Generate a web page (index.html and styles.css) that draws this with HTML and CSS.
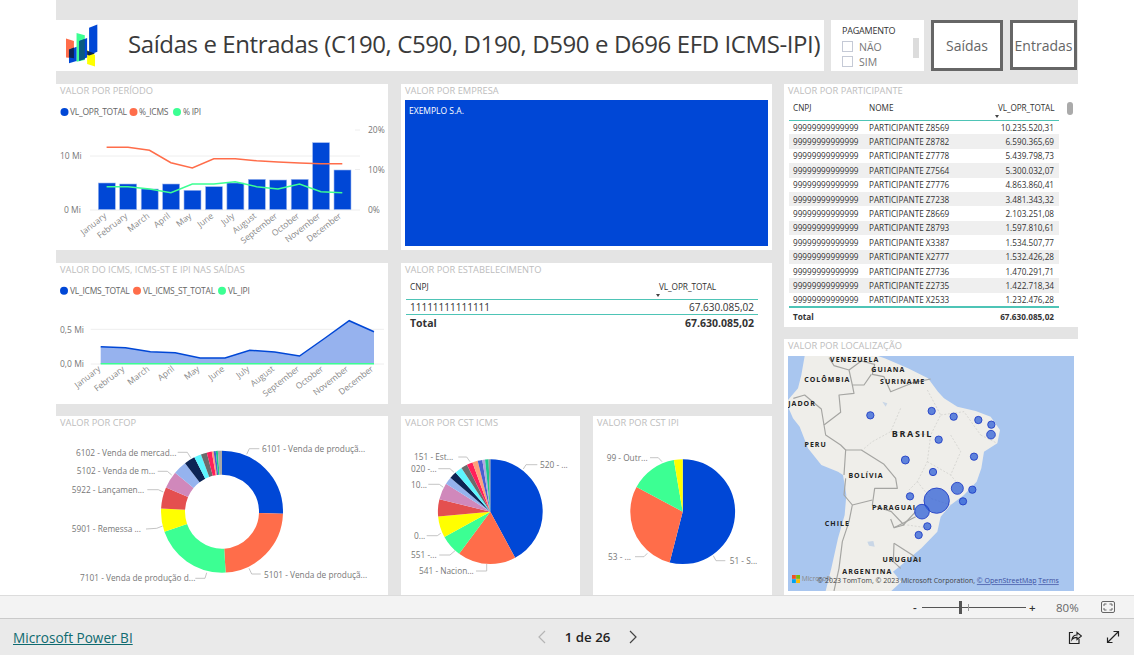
FILE: index.html
```html
<!DOCTYPE html>
<html lang="pt">
<head>
<meta charset="utf-8">
<title>Saídas e Entradas</title>
<link rel="stylesheet" href="styles.css">
</head>
<body>
<div class="canvas">
  <header class="header">
    <div class="title-box">
      <svg class="logo" viewBox="198 72 97 128" width="32" height="43">
        <polygon points="198,115 222,122 222,175 198,172" fill="#ff6d4a"/>
        <polygon points="230,98 255,105 255,180 230,185" fill="#3cff93"/>
        <polygon points="262,150 286,165 286,200 262,192" fill="#ffff00"/>
        <polygon points="268,82 293,72 293,155 268,165" fill="#0047d6"/>
        <polygon points="238,122 262,113 262,172 238,182" fill="#0047d6"/>
        <polygon points="207,150 230,140 230,183 207,190" fill="#0047d6"/>
        <polygon points="207,148 222,142 222,175 207,172" fill="#0c2454"/>
        <polygon points="238,122 255,116 255,178 238,182" fill="#0a5a80"/>
        <polygon points="262,152 286,160 268,166 262,164" fill="#0c2454"/>
      </svg>
      <h1 class="title">Saídas e Entradas (C190, C590, D190, D590 e D696 EFD ICMS-IPI)</h1>
    </div>
    <div class="slicer">
      <div class="slicer-title">PAGAMENTO</div>
      <label class="slicer-item"><span class="check"></span>NÃO</label>
      <label class="slicer-item"><span class="check"></span>SIM</label>
      <span class="slicer-scroll"></span>
    </div>
    <button class="nav-btn nav-btn-out">Saídas</button>
    <button class="nav-btn nav-btn-in">Entradas</button>
  </header>

  <div class="dash">
    <div class="main">
      <div class="row row-1">
        <section class="panel">
          <div class="panel-title">VALOR POR PERÍODO</div>
          <svg class="chart" viewBox="56 97 332 153" width="332" height="153">
            <g class="legend">
              <circle cx="64.5" cy="112" r="4" fill="#0047d6"/><text x="70" y="115">VL_OPR_TOTAL</text>
              <circle cx="133.5" cy="112" r="4" fill="#ff6d4a"/><text x="139" y="115">%_ICMS</text>
              <circle cx="177" cy="112" r="4" fill="#3cff93"/><text x="183" y="115">% IPI</text>
            </g>
            <line class="grid" x1="90" y1="156" x2="360" y2="156"/>
            <line class="grid" x1="90" y1="210" x2="360" y2="210"/>
            <line class="grid" x1="355" y1="130" x2="360" y2="130"/>
            <line class="grid" x1="355" y1="169.5" x2="360" y2="169.5"/>
            <g class="bars">
              <rect x="98.3" y="183" width="17" height="26.5"/>
              <rect x="119.7" y="184" width="17" height="25.5"/>
              <rect x="141.2" y="189" width="17" height="20.5"/>
              <rect x="162.6" y="184" width="17" height="25.5"/>
              <rect x="184" y="190.3" width="17" height="19.2"/>
              <rect x="205.5" y="186.7" width="17" height="22.8"/>
              <rect x="226.9" y="183" width="17" height="26.5"/>
              <rect x="248.3" y="179.3" width="17" height="30.2"/>
              <rect x="269.7" y="180" width="17" height="29.5"/>
              <rect x="291.2" y="179.3" width="17" height="30.2"/>
              <rect x="312.6" y="142.7" width="17" height="66.8"/>
              <rect x="334" y="170" width="17" height="39.5"/>
            </g>
            <polyline class="line" stroke="#ff6d4a" points="106.6,147.3 128,147.3 149.5,150.3 170.9,162.7 192.3,168 213.8,158.7 235.2,158.7 256.6,160.7 278,162 299.5,163 320.9,163.7 342.3,163.7"/>
            <polyline class="line" stroke="#3cff93" points="106.6,186.7 128,186.7 149.5,189 170.9,192.7 192.3,184 213.8,184 235.2,181.7 256.6,186.7 278,189 299.5,184 320.9,191.7 342.3,192.7"/>
            <g class="axis">
              <text x="60" y="159">10 Mi</text><text x="64" y="213">0 Mi</text>
              <text x="368" y="133">20%</text><text x="368" y="173">10%</text><text x="368" y="213">0%</text>
            </g>
            <g class="axis months">
              <text x="107" y="217" transform="rotate(-38 107 217)">January</text>
              <text x="128" y="217" transform="rotate(-38 128 217)">February</text>
              <text x="150" y="217" transform="rotate(-38 150 217)">March</text>
              <text x="171" y="217" transform="rotate(-38 171 217)">April</text>
              <text x="192" y="217" transform="rotate(-38 192 217)">May</text>
              <text x="214" y="217" transform="rotate(-38 214 217)">June</text>
              <text x="235" y="217" transform="rotate(-38 235 217)">July</text>
              <text x="257" y="217" transform="rotate(-38 257 217)">August</text>
              <text x="278" y="217" transform="rotate(-38 278 217)">September</text>
              <text x="300" y="217" transform="rotate(-38 300 217)">October</text>
              <text x="321" y="217" transform="rotate(-38 321 217)">November</text>
              <text x="342" y="217" transform="rotate(-38 342 217)">December</text>
            </g>
          </svg>
        </section>
        <section class="panel">
          <div class="panel-title">VALOR POR EMPRESA</div>
          <div class="treemap">EXEMPLO S.A.</div>
        </section>
      </div>

      <div class="row row-2">
        <section class="panel">
          <div class="panel-title">VALOR DO ICMS, ICMS-ST E IPI NAS SAÍDAS</div>
          <svg class="chart" viewBox="56 276 332 128" width="332" height="128">
            <g class="legend">
              <circle cx="64" cy="290.7" r="4" fill="#0047d6"/><text x="70" y="293.7">VL_ICMS_TOTAL</text>
              <circle cx="137" cy="290.7" r="4" fill="#ff6d4a"/><text x="143" y="293.7">VL_ICMS_ST_TOTAL</text>
              <circle cx="222" cy="290.7" r="4" fill="#3cff93"/><text x="228" y="293.7">VL_IPI</text>
            </g>
            <line class="grid" x1="90.7" y1="329.3" x2="384" y2="329.3"/>
            <line class="grid" x1="90.7" y1="364" x2="384" y2="364"/>
            <polygon fill="#96b2ee" points="100.7,346.7 125.5,347.7 150.4,351.7 175.2,352.7 200.1,358 225,358 249.8,350.3 274.7,352 299.5,356 324.4,338.5 349.2,320.7 374,331.7 374,364 100.7,364"/>
            <polyline class="line" stroke="#0047d6" points="100.7,346.7 125.5,347.7 150.4,351.7 175.2,352.7 200.1,358 225,358 249.8,350.3 274.7,352 299.5,356 324.4,338.5 349.2,320.7 374,331.7"/>
            <line class="line" stroke="#3cff93" x1="100.7" y1="363.7" x2="374" y2="363.7"/>
            <g class="axis">
              <text x="60" y="332.5">0,5 Mi</text><text x="60" y="367">0,0 Mi</text>
            </g>
            <g class="axis months">
              <text x="101" y="370" transform="rotate(-38 101 370)">January</text>
              <text x="125" y="370" transform="rotate(-38 125 370)">February</text>
              <text x="150" y="370" transform="rotate(-38 150 370)">March</text>
              <text x="175" y="370" transform="rotate(-38 175 370)">April</text>
              <text x="200" y="370" transform="rotate(-38 200 370)">May</text>
              <text x="225" y="370" transform="rotate(-38 225 370)">June</text>
              <text x="250" y="370" transform="rotate(-38 250 370)">July</text>
              <text x="275" y="370" transform="rotate(-38 275 370)">August</text>
              <text x="300" y="370" transform="rotate(-38 300 370)">September</text>
              <text x="324" y="370" transform="rotate(-38 324 370)">October</text>
              <text x="349" y="370" transform="rotate(-38 349 370)">November</text>
              <text x="374" y="370" transform="rotate(-38 374 370)">December</text>
            </g>
          </svg>
        </section>
        <section class="panel">
          <div class="panel-title">VALOR POR ESTABELECIMENTO</div>
          <table class="tbl tbl-est">
            <thead><tr><th>CNPJ</th><th class="th-sort">VL_OPR_TOTAL</th></tr></thead>
            <tbody><tr><td>11111111111111</td><td class="num">67.630.085,02</td></tr></tbody>
            <tfoot><tr><td>Total</td><td class="num">67.630.085,02</td></tr></tfoot>
          </table>
        </section>
      </div>

      <div class="row row-3">
        <section class="panel">
          <div class="panel-title">VALOR POR CFOP</div>
          <svg class="chart" viewBox="56 429 332 166" width="332" height="166">
            <g transform="rotate(-90 222 511.7)" fill="none" stroke-width="24">
              <circle cx="222" cy="511.7" r="49" pathLength="360" stroke="#0047d6" stroke-dasharray="92 360"/>
              <circle cx="222" cy="511.7" r="49" pathLength="360" stroke="#ff6d4a" stroke-dasharray="84.5 360" stroke-dashoffset="-92"/>
              <circle cx="222" cy="511.7" r="49" pathLength="360" stroke="#3cff93" stroke-dasharray="74.2 360" stroke-dashoffset="-176.5"/>
              <circle cx="222" cy="511.7" r="49" pathLength="360" stroke="#ffff00" stroke-dasharray="22.3 360" stroke-dashoffset="-250.7"/>
              <circle cx="222" cy="511.7" r="49" pathLength="360" stroke="#e44f4f" stroke-dasharray="20.4 360" stroke-dashoffset="-273"/>
              <circle cx="222" cy="511.7" r="49" pathLength="360" stroke="#d088bb" stroke-dasharray="16.4 360" stroke-dashoffset="-293.4"/>
              <circle cx="222" cy="511.7" r="49" pathLength="360" stroke="#95b3ee" stroke-dasharray="12.9 360" stroke-dashoffset="-309.8"/>
              <circle cx="222" cy="511.7" r="49" pathLength="360" stroke="#0c2454" stroke-dasharray="10.3 360" stroke-dashoffset="-322.7"/>
              <circle cx="222" cy="511.7" r="49" pathLength="360" stroke="#5cf6ff" stroke-dasharray="6.8 360" stroke-dashoffset="-333"/>
              <circle cx="222" cy="511.7" r="49" pathLength="360" stroke="#6b6b6b" stroke-dasharray="5.7 360" stroke-dashoffset="-339.8"/>
              <circle cx="222" cy="511.7" r="49" pathLength="360" stroke="#ff1f5a" stroke-dasharray="4.8 360" stroke-dashoffset="-345.5"/>
              <circle cx="222" cy="511.7" r="49" pathLength="360" stroke="#ffa07a" stroke-dasharray="1.7 360" stroke-dashoffset="-350.3"/>
              <circle cx="222" cy="511.7" r="49" pathLength="360" stroke="#4a5fd0" stroke-dasharray="2 360" stroke-dashoffset="-352"/>
              <circle cx="222" cy="511.7" r="49" pathLength="360" stroke="#19c98b" stroke-dasharray="2 360" stroke-dashoffset="-354"/>
              <circle cx="222" cy="511.7" r="49" pathLength="360" stroke="#a8a8a8" stroke-dasharray="4 360" stroke-dashoffset="-356"/>
            </g>
            <g class="leaders">
              <polyline points="246.7,454.3 249.3,448.7 259.3,448.7"/>
              <polyline points="177.7,452.3 187.3,452.3 190.7,457.7"/>
              <polyline points="157.7,471.3 167.3,471.3 171.7,475"/>
              <polyline points="147.3,489.7 158.3,489.7 163.3,492"/>
              <polyline points="146,529 156.7,528.3 162.7,526"/>
              <polyline points="195.3,578.3 205,578.3 206.7,572.7"/>
              <polyline points="249,568.3 251.7,574 260.7,574"/>
            </g>
            <g class="axis pie-label">
              <text x="262" y="452">6101 - Venda de produçã...</text>
              <text x="76" y="456">6102 - Venda de mercad...</text>
              <text x="76.7" y="474">5102 - Venda de m...</text>
              <text x="71.7" y="493">5922 - Lançamen...</text>
              <text x="71.7" y="532">5901 - Remessa ...</text>
              <text x="80" y="581">7101 - Venda de produção d...</text>
              <text x="264" y="578">5101 - Venda de produçã...</text>
            </g>
          </svg>
        </section>
        <div class="pair">
          <section class="panel">
            <div class="panel-title">VALOR POR CST ICMS</div>
            <svg class="chart" viewBox="401 429 179 166" width="179" height="166">
              <g transform="rotate(-90 490.3 511.7)" fill="none" stroke-width="52.4">
                <circle cx="490.3" cy="511.7" r="26.2" pathLength="360" stroke="#0047d6" stroke-dasharray="151.6 360"/>
                <circle cx="490.3" cy="511.7" r="26.2" pathLength="360" stroke="#ff6d4a" stroke-dasharray="65 360" stroke-dashoffset="-151.6"/>
                <circle cx="490.3" cy="511.7" r="26.2" pathLength="360" stroke="#3cff93" stroke-dasharray="24.4 360" stroke-dashoffset="-216.6"/>
                <circle cx="490.3" cy="511.7" r="26.2" pathLength="360" stroke="#ffff00" stroke-dasharray="23.5 360" stroke-dashoffset="-241"/>
                <circle cx="490.3" cy="511.7" r="26.2" pathLength="360" stroke="#e44f4f" stroke-dasharray="19.5 360" stroke-dashoffset="-264.5"/>
                <circle cx="490.3" cy="511.7" r="26.2" pathLength="360" stroke="#d088bb" stroke-dasharray="18.4 360" stroke-dashoffset="-284"/>
                <circle cx="490.3" cy="511.7" r="26.2" pathLength="360" stroke="#95b3ee" stroke-dasharray="8.2 360" stroke-dashoffset="-302.4"/>
                <circle cx="490.3" cy="511.7" r="26.2" pathLength="360" stroke="#0c2454" stroke-dasharray="7.8 360" stroke-dashoffset="-310.6"/>
                <circle cx="490.3" cy="511.7" r="26.2" pathLength="360" stroke="#5cf6ff" stroke-dasharray="8.1 360" stroke-dashoffset="-318.4"/>
                <circle cx="490.3" cy="511.7" r="26.2" pathLength="360" stroke="#6b6b6b" stroke-dasharray="6.9 360" stroke-dashoffset="-326.5"/>
                <circle cx="490.3" cy="511.7" r="26.2" pathLength="360" stroke="#ff1f5a" stroke-dasharray="6.6 360" stroke-dashoffset="-333.4"/>
                <circle cx="490.3" cy="511.7" r="26.2" pathLength="360" stroke="#ffa07a" stroke-dasharray="5.8 360" stroke-dashoffset="-340"/>
                <circle cx="490.3" cy="511.7" r="26.2" pathLength="360" stroke="#4a5fd0" stroke-dasharray="5.1 360" stroke-dashoffset="-345.8"/>
                <circle cx="490.3" cy="511.7" r="26.2" pathLength="360" stroke="#b0a8e0" stroke-dasharray="3.1 360" stroke-dashoffset="-350.9"/>
                <circle cx="490.3" cy="511.7" r="26.2" pathLength="360" stroke="#19c98b" stroke-dasharray="4 360" stroke-dashoffset="-354"/>
                <circle cx="490.3" cy="511.7" r="26.2" pathLength="360" stroke="#999999" stroke-dasharray="2 360" stroke-dashoffset="-358"/>
              </g>
              <g class="leaders">
                <polyline points="458.3,457 466.7,457 470,461.7"/>
                <polyline points="438.3,468.7 450,468.7 454,472.3"/>
                <polyline points="428.3,484.3 439.3,484.3 443.3,487.3"/>
                <polyline points="426.7,535.7 437.3,535.7 440.7,533.3"/>
                <polyline points="439.3,555 450,555 455,550.7"/>
                <polyline points="476,571 486.7,571 486.7,564"/>
                <polyline points="523.3,469 526,464.7 537.3,464.7"/>
              </g>
              <g class="axis pie-label">
                <text x="414" y="460">151 - Est...</text>
                <text x="411" y="472">020 -...</text>
                <text x="411" y="488">10...</text>
                <text x="414" y="539">0...</text>
                <text x="411" y="558">551 -...</text>
                <text x="419" y="574">541 - Nacion...</text>
                <text x="540" y="468">520 - ...</text>
              </g>
            </svg>
          </section>
          <section class="panel">
            <div class="panel-title">VALOR POR CST IPI</div>
            <svg class="chart" viewBox="593 429 179 166" width="179" height="166">
              <g transform="rotate(-90 682.7 511.7)" fill="none" stroke-width="52.4">
                <circle cx="682.7" cy="511.7" r="26.2" pathLength="360" stroke="#0047d6" stroke-dasharray="194.7 360"/>
                <circle cx="682.7" cy="511.7" r="26.2" pathLength="360" stroke="#ff6d4a" stroke-dasharray="103.6 360" stroke-dashoffset="-194.7"/>
                <circle cx="682.7" cy="511.7" r="26.2" pathLength="360" stroke="#3cff93" stroke-dasharray="51.7 360" stroke-dashoffset="-298.3"/>
                <circle cx="682.7" cy="511.7" r="26.2" pathLength="360" stroke="#ffff00" stroke-dasharray="10 360" stroke-dashoffset="-350"/>
              </g>
              <g class="leaders">
                <polyline points="650,457.7 658.3,457.7 662,461.7"/>
                <polyline points="635,556.7 644,556.7 647.3,553.3"/>
                <polyline points="713.3,555.7 716,560.7 725.3,560.7"/>
              </g>
              <g class="axis pie-label">
                <text x="606.7" y="461">99 - Outr...</text>
                <text x="608" y="560">53 - ...</text>
                <text x="729.7" y="564">51 - S...</text>
              </g>
            </svg>
          </section>
        </div>
      </div>
    </div>

    <div class="side">
      <section class="panel panel-part">
        <div class="panel-title">VALOR POR PARTICIPANTE</div>
        <span class="scroll-thumb"></span>
        <table class="tbl tbl-part">
          <thead><tr><th class="c1">CNPJ</th><th class="c2">NOME</th><th class="th-sort">VL_OPR_TOTAL</th></tr></thead>
          <tbody>
            <tr><td>99999999999999</td><td>PARTICIPANTE Z8569</td><td class="num">10.235.520,31</td></tr>
            <tr><td>99999999999999</td><td>PARTICIPANTE Z8782</td><td class="num">6.590.365,69</td></tr>
            <tr><td>99999999999999</td><td>PARTICIPANTE Z7778</td><td class="num">5.439.798,73</td></tr>
            <tr><td>99999999999999</td><td>PARTICIPANTE Z7564</td><td class="num">5.300.032,07</td></tr>
            <tr><td>99999999999999</td><td>PARTICIPANTE Z7776</td><td class="num">4.863.860,41</td></tr>
            <tr><td>99999999999999</td><td>PARTICIPANTE Z7238</td><td class="num">3.481.343,32</td></tr>
            <tr><td>99999999999999</td><td>PARTICIPANTE Z8669</td><td class="num">2.103.251,08</td></tr>
            <tr><td>99999999999999</td><td>PARTICIPANTE Z8793</td><td class="num">1.597.810,61</td></tr>
            <tr><td>99999999999999</td><td>PARTICIPANTE X3387</td><td class="num">1.534.507,77</td></tr>
            <tr><td>99999999999999</td><td>PARTICIPANTE X2777</td><td class="num">1.532.426,28</td></tr>
            <tr><td>99999999999999</td><td>PARTICIPANTE Z7736</td><td class="num">1.470.291,71</td></tr>
            <tr><td>99999999999999</td><td>PARTICIPANTE Z2735</td><td class="num">1.422.718,34</td></tr>
            <tr><td>99999999999999</td><td>PARTICIPANTE X2533</td><td class="num">1.232.476,28</td></tr>
          </tbody>
          <tfoot><tr><td>Total</td><td></td><td class="num">67.630.085,02</td></tr></tfoot>
        </table>
      </section>
      <section class="panel panel-map">
        <div class="panel-title">VALOR POR LOCALIZAÇÃO</div>
        <svg class="map" viewBox="12 63 858 705" width="286" height="235">
          <rect x="12" y="63" width="858" height="705" fill="#a9c6ef"/>
          <path fill="#efeeea" d="M62,63 L52,120 L42,160 L12,195 L12,215 L27,250 L47,275 L72,340 L112,390 L162,410 L177,420 L187,480 L182,540 L162,610 L142,700 L125,768 L322,768 L352,740 L327,710 L352,690 L412,640 L460,590 L470,545 L500,510 L540,480 L578,440 L592,400 L600,350 L640,325 L648,285 L620,245 L575,228 L520,215 L480,190 L462,170 L432,130 L372,100 L302,70 L282,63 Z"/>
          <g class="border">
            <path d="M135,68 L150,92 L195,105 L205,150 L210,175 L165,180 L170,232 L120,270 L125,300 L170,330 L185,345 L180,420"/>
            <path d="M195,105 L232,78 L272,88 L265,118 L300,125 L320,170 L390,142 L440,132"/>
            <path d="M205,150 L240,150 L262,118"/>
            <path d="M28,190 L62,180 L112,222 L120,270"/>
            <path d="M185,345 L232,345 L300,388 L335,430 L340,460 L272,460 L265,510 L322,530 L360,570 L330,578 L320,552"/>
            <path d="M185,430 L180,480 L205,510 L195,560 L175,620 L165,700 L150,768"/>
            <path d="M205,510 L265,495"/>
            <path d="M330,578 L395,545"/>
            <path d="M330,625 L385,660 L410,680"/>
            <path d="M330,625 L328,680 L350,700"/>
            <path d="M358,570 L395,530"/>
          </g>
          <g class="state">
            <path d="M350,220 L320,290 L265,320 L235,345"/>
            <path d="M430,165 L470,240 L440,300 L430,380 L400,440 L370,470"/>
            <path d="M320,290 L440,300"/>
            <path d="M470,240 L540,230 L590,300"/>
            <path d="M500,300 L530,350 L500,420 L540,470"/>
            <path d="M430,380 L500,420"/>
            <path d="M400,440 L440,490 L500,510"/>
            <path d="M590,300 L640,325"/>
            <path d="M370,570 L440,580"/>
          </g>
          <path fill="#c9d6e6" d="M250,620 L268,618 L272,635 L255,632 Z"/>
          <path fill="#c9d6e6" d="M295,200 L310,205 L305,215 Z"/>
          <g class="map-label">
            <text x="212" y="80">VENEZUELA</text>
            <text x="313" y="112">GUIANA</text>
            <text x="356" y="146">SURINAME</text>
            <text x="130" y="140">COLÔMBIA</text>
            <text x="54" y="212">JADOR</text>
            <text class="map-label-big" x="385" y="307">BRASIL</text>
            <text x="95" y="337">PERU</text>
            <text x="246" y="428">BOLÍVIA</text>
            <text x="330" y="524">PARAGUAI</text>
            <text x="160" y="572">CHILE</text>
            <text x="355" y="682">URUGUAI</text>
            <text x="250" y="716">ARGENTINA</text>
          </g>
          <g class="bubble">
            <circle cx="259" cy="241" r="11"/><circle cx="443" cy="228" r="11"/><circle cx="509" cy="245" r="11"/>
            <circle cx="583" cy="255" r="11"/><circle cx="622" cy="269" r="11"/><circle cx="621" cy="299" r="13"/>
            <circle cx="464" cy="314" r="11"/><circle cx="570" cy="365" r="11"/><circle cx="364" cy="375" r="12"/>
            <circle cx="447" cy="411" r="11"/><circle cx="520" cy="460" r="18"/><circle cx="565" cy="464" r="11"/>
            <circle cx="537" cy="499" r="11"/><circle cx="378" cy="484" r="11"/><circle cx="458" cy="497" r="38"/>
            <circle cx="414" cy="530" r="22"/><circle cx="430" cy="574" r="11"/><circle cx="404" cy="600" r="11"/>
          </g>
          <g>
            <rect x="24" y="720" width="11.5" height="11.5" fill="#f25022"/>
            <rect x="36.5" y="720" width="11.5" height="11.5" fill="#7fba00"/>
            <rect x="24" y="732.5" width="11.5" height="11.5" fill="#00a4ef"/>
            <rect x="36.5" y="732.5" width="11.5" height="11.5" fill="#ffb900"/>
            <text class="map-ms" x="53" y="738">Microsoft</text>
            <text class="map-attr" x="100" y="745">© 2023 TomTom, © 2023 Microsoft Corporation, <tspan class="map-link">© OpenStreetMap</tspan>  <tspan class="map-link">Terms</tspan></text>
          </g>
        </svg>
      </section>
    </div>
  </div>
</div>

<div class="statusbar">
  <span class="zoom-sign">-</span>
  <span class="slider"><span class="slider-tick"></span><span class="slider-thumb"></span></span>
  <span class="zoom-sign">+</span>
  <span class="zoom-pct">80%</span>
  <svg class="fit-icon" viewBox="0 0 14 12" width="14" height="12">
    <rect x="0.5" y="0.5" width="13" height="11" rx="1.5" class="icon-stroke"/>
    <path d="M3 5V3h2.5M8.5 3H11v2M11 7v2H8.5M5.5 9H3V7" class="icon-stroke"/>
  </svg>
</div>

<footer class="footer">
  <a class="pbi-link" href="#">Microsoft Power BI</a>
  <nav class="pager">
    <svg class="pager-arrow" viewBox="0 0 8 14" width="8" height="14"><path d="M7 1L1 7l6 6" class="arrow-off"/></svg>
    <span class="pager-text">1 de 26</span>
    <svg class="pager-arrow" viewBox="0 0 8 14" width="8" height="14"><path d="M1 1l6 6-6 6" class="arrow-on"/></svg>
  </nav>
  <div class="foot-icons">
    <svg viewBox="0 0 14 15" width="14" height="15">
      <path d="M5 2.5H1.5v11h9.5V9" class="foot-icon"/>
      <path d="M4 9.5C4.5 6.5 6.5 5 9 5V2.5L13.5 6 9 9.5V7.3C7 7.3 5.2 8 4 9.5Z" class="foot-icon"/>
    </svg>
    <svg viewBox="0 0 14 14" width="14" height="14">
      <path d="M1.5 12.5L12.5 1.5M7.5 1.5h5v5M1.5 7.5v5h5" class="foot-icon"/>
    </svg>
  </div>
</footer>
</body>
</html>
```

FILE: styles.css
```css
* { box-sizing: border-box; }
html, body { margin: 0; padding: 0; }
body {
  width: 1134px;
  height: 655px;
  overflow: hidden;
  background: #fff;
  font-family: "Open Sans", "Noto Sans", sans-serif;
  display: flex;
  flex-direction: column;
}
.canvas {
  width: 1022px;
  height: 595px;
  margin-left: 56px;
  padding-top: 20px;
  background: #e4e4e4;
  overflow: hidden;
}
.header { display: flex; height: 51px; gap: 7px; }
.title-box {
  width: 768px;
  background: #fff;
  display: flex;
  align-items: center;
  padding-left: 10px;
}
.logo { display: block; flex: none; }
.title {
  margin: 0 0 5px 30px;
  font-size: 24px;
  font-weight: 400;
  color: #3a3a3a;
  white-space: nowrap;
  letter-spacing: -0.4px;
}
.slicer {
  position: relative;
  width: 93px;
  background: #fff;
  padding: 5px 0 0 11px;
  font-size: 9px;
  color: #333;
}
.slicer-title { line-height: 11px; height: 14px; letter-spacing: -0.2px; }
.slicer-item {
  display: flex;
  align-items: center;
  height: 15px;
  font-size: 10.5px;
  color: #777;
}
.check {
  width: 11px;
  height: 11px;
  border: 1px solid #c5cad6;
  margin-right: 6px;
}
.slicer-scroll {
  position: absolute;
  left: 82px;
  top: 18px;
  width: 6px;
  height: 20px;
  background: #dcdcdc;
}
.nav-btn {
  background: #fff;
  border: 3px solid #666;
  color: #666;
  font-family: inherit;
  font-size: 14px;
  padding: 0;
}
.nav-btn-out { width: 72px; }
.nav-btn-in { width: 67px; height: 50px; }

.dash {
  display: grid;
  grid-template-columns: 716px 294px;
  column-gap: 12px;
  margin-top: 13px;
}
.row { display: grid; grid-template-columns: 332px 371px; column-gap: 13px; }
.row-1 { height: 166px; }
.row-2 { height: 141px; margin-top: 13px; }
.row-3 { height: 179px; margin-top: 12px; }
.pair { display: grid; grid-template-columns: 179px 179px; column-gap: 13px; }
.panel { position: relative; background: #fff; overflow: hidden; }
.panel-title {
  height: 13px;
  padding-left: 4px;
  font-size: 9.3px;
  line-height: 13px;
  color: #bdbdbd;
  white-space: nowrap;
}
.chart { display: block; }
.chart text { font-family: "Open Sans", "Noto Sans", sans-serif; font-size: 8.5px; }
.legend text { fill: #666; letter-spacing: -0.25px; }
.axis text { fill: #777; }
.months text { text-anchor: end; fill: #8a8a8a; }
.chart .pie-label text { font-size: 8.3px; fill: #777; }
.grid { stroke: #eeeeee; stroke-width: 1; }
.bars rect { fill: #0047d6; stroke: #9db7ee; stroke-width: 0.6; }
.line { fill: none; stroke-width: 1.5; }
.leaders polyline { fill: none; stroke: #b5b5b5; stroke-width: 0.8; }

.treemap {
  margin: 3px 4px 0;
  height: 146px;
  background: #0047d6;
  color: #fff;
  font-size: 8.5px;
  padding: 5px 4px;
}

.tbl { border-collapse: collapse; table-layout: fixed; color: #333; }
.tbl th { font-weight: 400; text-align: left; vertical-align: top; white-space: nowrap; }
.num { text-align: right; }
.tbl td { white-space: nowrap; padding: 0; }
.th-sort { position: relative; }
.th-sort::after {
  content: "";
  position: absolute;
  left: 1px;
  bottom: 2px;
  border: 2.5px solid transparent;
  border-top: 3px solid #444;
  border-bottom: 0;
}
.tbl-est {
  width: 352px;
  margin-left: 5px;
  font-size: 10px;
}
.tbl-est th {
  height: 23px;
  font-size: 8.3px;
  padding: 5px 0 0 4px;
  border-bottom: 1px solid #4ec4b6;
  width: 249px;
}
.tbl-est th.th-sort { width: 103px; letter-spacing: -0.1px; }
.tbl-est tbody td { height: 15px; padding: 0 4px; border-bottom: 1px solid #4ec4b6; }
.tbl-est tfoot td { height: 18px; padding: 0 4px; font-size: 10.5px; font-weight: 700; }

.side { display: flex; flex-direction: column; }
.panel-part { height: 243px; }
.panel-map { height: 256px; margin-top: 12px; }
.scroll-thumb {
  position: absolute;
  left: 283px;
  top: 18px;
  width: 6px;
  height: 13px;
  border-radius: 3px;
  background: #aaa;
}
.tbl-part {
  width: 270px;
  margin-left: 5px;
  font-size: 8.2px;
}
.tbl-part th {
  height: 23px;
  padding: 5px 0 0 4px;
  border-bottom: 1px solid #4ec4b6;
}
.tbl-part .c1 { width: 76px; }
.tbl-part .c2 { width: 129px; }
.tbl-part .th-sort { width: 65px; padding-left: 4px; letter-spacing: -0.1px; }
.tbl-part td { height: 14.4px; padding: 0 5px 0 4px; }
.tbl-part tbody tr:nth-child(even) { background: #efefef; }
.tbl-part tfoot td { height: 17px; border-top: 2px solid #4ec4b6; font-weight: 700; }

.map { display: block; margin: 4px 0 0 4px; }
.border path { fill: none; stroke: #a5a5a2; stroke-width: 3.5; stroke-linejoin: round; }
.state path { fill: none; stroke: #c2c2be; stroke-width: 1.6; stroke-dasharray: 6 5; }
.map-label text {
  font-family: "Open Sans", "Noto Sans", sans-serif;
  font-size: 21px;
  font-weight: 700;
  fill: #222;
  text-anchor: middle;
  letter-spacing: 3px;
}
.map-label .map-label-big { font-size: 27px; letter-spacing: 5px; }
.bubble circle { fill: #2f5fd6; fill-opacity: 0.75; stroke: #1c38c4; stroke-width: 2.5; }
.map-ms { font-family: "Open Sans", sans-serif; font-size: 20px; fill: #888; }
.map-attr { font-family: "Open Sans", sans-serif; font-size: 21px; fill: #444; }
.map-link { text-decoration: underline; fill: #3a4ea0; }

.statusbar {
  height: 24px;
  flex: none;
  background: #f3f3f3;
  border-top: 1px solid #dcdcdc;
  border-bottom: 1px solid #cacaca;
  display: flex;
  align-items: center;
  padding-left: 913px;
  font-size: 11.5px;
  color: #666;
}
.zoom-sign { width: 9px; text-align: left; color: #333; font-weight: 600; }
.slider {
  position: relative;
  width: 104px;
  height: 1px;
  background: #555;
  margin-right: 3px;
}
.slider-tick { position: absolute; left: 46px; top: -3px; width: 1px; height: 7px; background: #999; }
.slider-thumb { position: absolute; left: 37px; top: -6px; width: 3px; height: 13px; background: #555; }
.zoom-pct { margin-left: 18px; width: 23px; }
.fit-icon { margin-left: 22px; }
.icon-stroke { fill: none; stroke: #666; stroke-width: 1; }

.footer {
  flex: 1;
  background: #eaeaea;
  display: flex;
  align-items: center;
  padding: 0 14px 0 13px;
}
.pbi-link { color: #0f6b70; font-size: 13.6px; text-decoration: underline; white-space: nowrap; }
.pager { display: flex; align-items: center; margin-left: 405px; }
.pager-text { margin: 0 19px; font-size: 13.3px; font-weight: 600; color: #222; }
.pager-arrow { display: block; }
.arrow-off { fill: none; stroke: #b5b5b5; stroke-width: 1.2; }
.arrow-on { fill: none; stroke: #444; stroke-width: 1.2; }
.foot-icons { margin-left: auto; display: flex; gap: 24px; }
.foot-icon { fill: none; stroke: #222; stroke-width: 1.2; }
```
